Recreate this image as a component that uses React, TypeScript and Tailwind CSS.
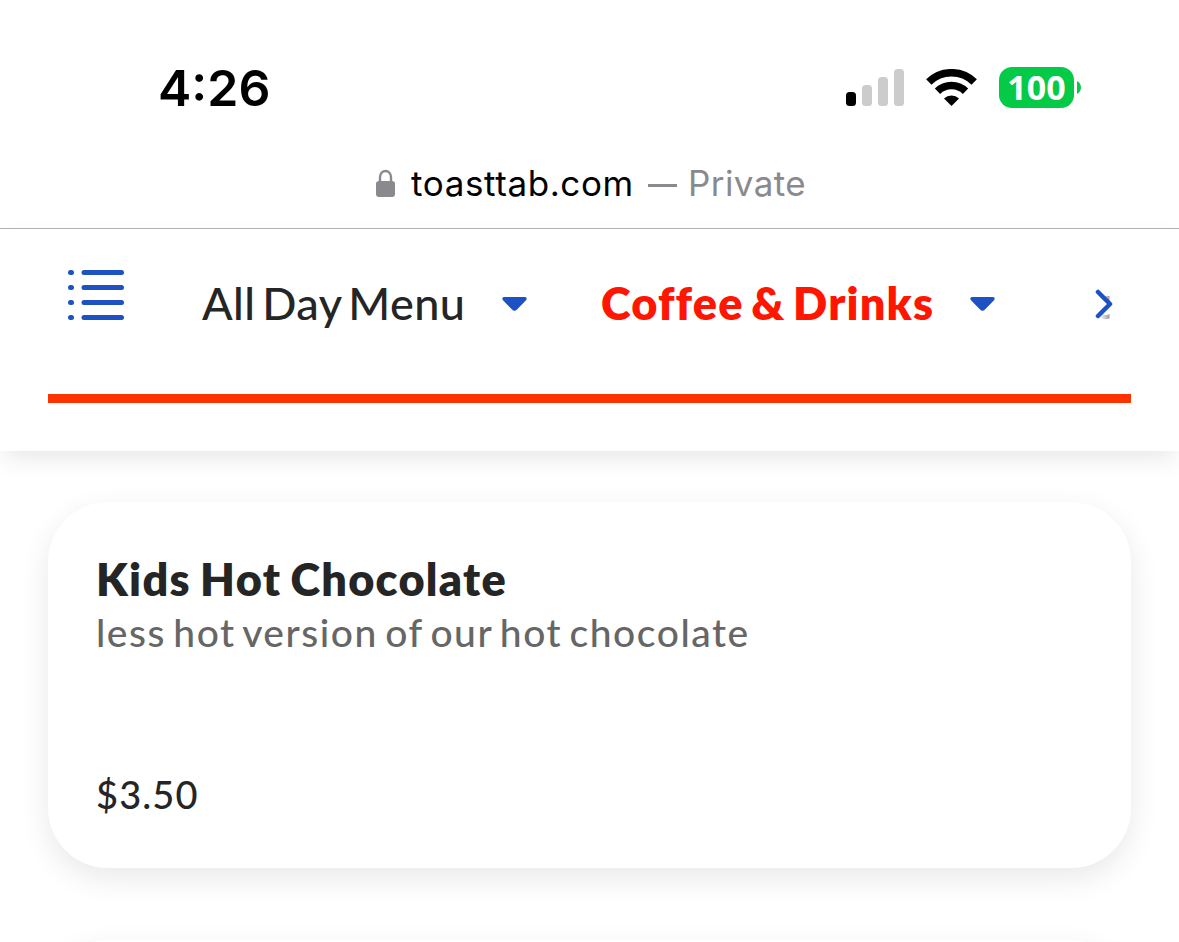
import React from 'react';

interface TabProps {
  label: string;
  active?: boolean;
}

interface MenuItemProps {
  name: string;
  description: string;
  price: string;
}

const StatusBar: React.FC = () => (
  <div className="flex h-[150px] items-start justify-between pt-[58px] pr-[98px] pl-[158px]">
    <span className="font-['Inter',sans-serif] text-[50px] leading-[60px] font-semibold text-black">
      4:26
    </span>
    <div className="flex items-start pt-[9px]">
      <svg className="mt-[2px]" width="58" height="38" viewBox="0 0 58 38">
        <rect x="0" y="23" width="10" height="14" rx="3.5" fill="#000" />
        <rect x="16" y="16" width="10" height="21" rx="3.5" fill="#ccc" />
        <rect x="32" y="8" width="10" height="29" rx="3.5" fill="#ccc" />
        <rect x="48" y="0" width="10" height="37" rx="3.5" fill="#ccc" />
      </svg>
      <svg className="mt-[2px] ml-[22px]" width="51" height="37" viewBox="0 0 51 37">
        <path d="M2.8 13A32.5 32.5 0 0 1 48.2 13" fill="none" stroke="#000" strokeWidth="7.6" />
        <path d="M11.5 22.2A20 20 0 0 1 39.5 22.2" fill="none" stroke="#000" strokeWidth="7.6" />
        <path d="M25.5 37L18 29.4A11 11 0 0 1 33 29.4Z" fill="#000" />
      </svg>
      <div className="ml-[22px] flex h-[41px] w-[75px] items-center justify-center rounded-[13px] bg-[#04ca48]">
        <span className="font-['Open_Sans',sans-serif] text-[34px] leading-[41px] font-bold text-white">100</span>
      </div>
      <svg className="mt-[14px] ml-[3px]" width="4" height="13" viewBox="0 0 4 13">
        <path d="M0 0C5.3 2.6 5.3 10.4 0 13Z" fill="#04ca48" />
      </svg>
    </div>
  </div>
);

const AddressBar: React.FC = () => (
  <div className="flex h-[79px] items-start border-b border-[#b3b3b5] pt-[12px] pl-[376px] font-['Inter',sans-serif] text-[35px] leading-[42px]">
    <svg className="mt-[7px] shrink-0" width="19" height="29" viewBox="0 0 19 29">
      <path d="M4 14V8a5.5 6 0 0 1 11 0v6" fill="none" stroke="#8a8a8e" strokeWidth="2.4" />
      <rect x="0" y="12" width="19" height="16" rx="3" fill="#8a8a8e" />
    </svg>
    <span className="ml-[16px] w-[237px] tracking-[0.6px] whitespace-nowrap text-black">toasttab.com</span>
    <span className="mt-[22px] h-[3px] w-[29px] bg-[#8a8a8e]" />
    <span className="ml-[11px] tracking-[0.4px] whitespace-nowrap text-[#8a8a8e]">Private</span>
  </div>
);

const Caret: React.FC = () => (
  <svg className="mt-[2px]" width="25" height="15" viewBox="0 0 25 15">
    <path
      d="M2 0H23C24.7 0 25.2 2 24 3.2L15 12.6Q12.5 15 10 12.6L1 3.2C-.2 2 .3 0 2 0Z"
      fill="#1c52c4"
    />
  </svg>
);

const MenuTab: React.FC<TabProps> = ({ label, active }) => (
  <div className="flex items-center">
    <span
      className={
        active
          ? "w-[369px] text-[45px] leading-[56px] font-extrabold tracking-[1.2px] whitespace-nowrap text-[#ff1500] [word-spacing:-4px]"
          : "w-[300px] text-[45px] leading-[56px] font-medium tracking-[0.45px] whitespace-nowrap text-[#252525] [word-spacing:-5px]"
      }
    >
      {label}
    </span>
    <Caret />
  </div>
);

const MenuNav: React.FC = () => (
  <div className="relative z-10 h-[222px] bg-white px-12 shadow-[0_10px_24px_-4px_rgba(0,0,0,0.1)]">
    <div className="flex h-[165px] items-start pl-[20px]">
      <svg className="mt-[40px] mr-[78px] shrink-0" width="56" height="52" viewBox="0 0 56 52">
        {[3.6, 18.6, 33.4, 48.4].map((y) => (
          <g key={y} fill="#1c52c4">
            <rect x="0" y={y - 2.5} width="6" height="5" rx="2.5" />
            <rect x="13.5" y={y - 2.5} width="42.5" height="5" rx="2.5" />
          </g>
        ))}
      </svg>
      <div className="flex gap-[74px] pt-[46px]">
        <MenuTab label="All Day Menu" />
        <MenuTab label="Coffee & Drinks" active />
      </div>
      <svg className="mt-[60px] ml-[99px] shrink-0" width="20" height="32" viewBox="0 0 20 32">
        <defs>
          <linearGradient id="fade" x1="0" x2="1">
            <stop offset="0" stopColor="#fff" />
            <stop offset="1" stopColor="#999" />
          </linearGradient>
        </defs>
        <path d="M8 7H15.5V14L11 9Z" fill="url(#fade)" />
        <path d="M6 28L9 25Q12 27 15.5 25V29.5Q9 31.5 6 28Z" fill="url(#fade)" />
        <path d="M4 3L16 15L4 27" fill="none" stroke="#1c52c4" strokeWidth="4.5" strokeLinecap="round" strokeLinejoin="round" />
      </svg>
    </div>
    <div className="h-[9px] bg-[#ff3300]" />
  </div>
);

const MenuItem: React.FC<MenuItemProps> = ({ name, description, price }) => (
  <div className="flex h-[366px] shrink-0 flex-col rounded-[60px] bg-white px-12 pt-[50px] shadow-[0_10px_30px_rgba(0,0,0,0.09)]">
    <h3 className="text-[45px] leading-[54px] font-extrabold tracking-[1.3px] whitespace-nowrap text-[#252525] [word-spacing:-2.5px]">
      {name}
    </h3>
    <p className="text-[39px] leading-[52px] font-medium tracking-[1.53px] whitespace-nowrap text-[#666] [word-spacing:-4px]">
      {description}
    </p>
    <p className="mt-[110px] text-[38px] leading-[52px] font-medium tracking-[1.1px] text-[#252525]">{price}</p>
  </div>
);

const App: React.FC = () => {
  return (
    <div className="h-[942px] w-[1179px] overflow-hidden bg-white font-['Lato',sans-serif]">
      <StatusBar />
      <AddressBar />
      <MenuNav />
      <div className="flex flex-col gap-[72px] px-12 pt-[51px]">
        <MenuItem name="Kids Hot Chocolate" description="less hot version of our hot chocolate" price="$3.50" />
        <MenuItem name="" description="" price="" />
      </div>
    </div>
  );
};

export default App;
